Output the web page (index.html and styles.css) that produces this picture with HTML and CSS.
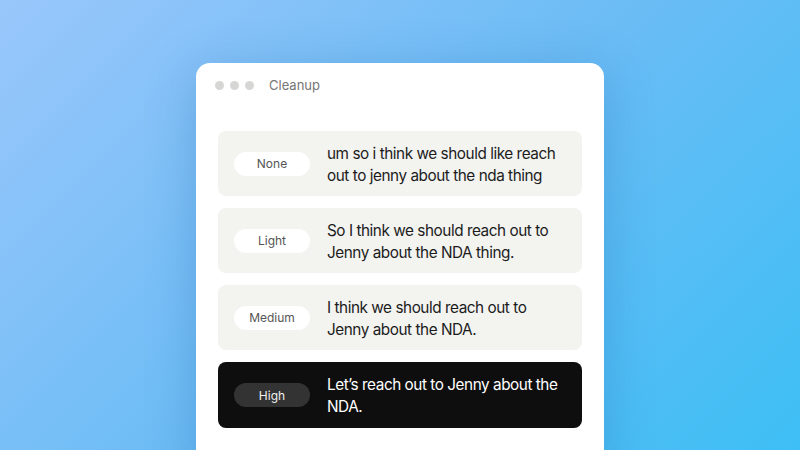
FILE: index.html
```html
<!DOCTYPE html>
<html>
<head>
<meta charset="utf-8">
<link rel="stylesheet" href="styles.css">
</head>
<body>
<div class="stage">
  <div class="window">
    <div class="titlebar">
      <div class="dots"><span class="dot"></span><span class="dot"></span><span class="dot"></span></div>
      <div class="title">Cleanup</div>
    </div>
    <div class="list">
      <div class="card">
        <div class="pill">None</div>
        <div class="text">um so i think we should like reach out to jenny about the nda thing</div>
      </div>
      <div class="card">
        <div class="pill">Light</div>
        <div class="text">So I think we should reach out to Jenny about the NDA thing.</div>
      </div>
      <div class="card">
        <div class="pill">Medium</div>
        <div class="text">I think we should reach out to Jenny about the NDA.</div>
      </div>
      <div class="card dark">
        <div class="pill">High</div>
        <div class="text">Let’s reach out to Jenny about the NDA.</div>
      </div>
    </div>
  </div>
</div>
</body>
</html>
```
FILE: styles.css
```css
html, body {
  margin: 0;
  padding: 0;
}
body {
  width: 800px;
  height: 450px;
  overflow: hidden;
  font-family: Inter, "Noto Sans", sans-serif;
}
.stage {
  width: 800px;
  height: 450px;
  overflow: hidden;
  background: linear-gradient(135deg, #99c7fb 0%, #6cbcf5 50%, #3dbff5 100%);
  display: flex;
  justify-content: center;
  padding-top: 63px;
  box-sizing: border-box;
}
.window {
  width: 408px;
  height: 420px;
  flex: 0 0 auto;
  background: #ffffff;
  border-radius: 14px 14px 0 0;
  box-shadow: 0 10px 50px rgba(20, 90, 160, 0.28);
  box-sizing: border-box;
  padding: 0 22px;
}
.titlebar {
  height: 44px;
  display: flex;
  align-items: center;
  gap: 15px;
}
.dots {
  display: flex;
  gap: 6px;
  margin-left: -3px;
}
.dot {
  width: 9px;
  height: 9px;
  border-radius: 50%;
  background: #d6d6d4;
}
.title {
  font-size: 13px;
  color: #767676;
}
.list {
  margin-top: 24px;
  display: flex;
  flex-direction: column;
  gap: 12px;
}
.card {
  height: 65px;
  background: #f3f3f0;
  border-radius: 8px;
  display: flex;
  align-items: center;
  padding: 0 16px 0 16px;
  box-sizing: border-box;
  gap: 17px;
}
.pill {
  flex: 0 0 76px;
  height: 24px;
  border-radius: 12px;
  background: #ffffff;
  color: #555555;
  font-size: 12px;
  display: flex;
  align-items: center;
  justify-content: center;
}
.text {
  font-size: 15.3px;
  line-height: 22px;
  letter-spacing: -0.45px;
  color: #1c1c1c;
  margin-top: 2px;
}
.card.dark {
  background: #0f0e0e;
  height: 66px;
}
.card.dark .pill {
  background: #333333;
  color: #f0f0f0;
}
.card.dark .text {
  color: #ffffff;
}
```
